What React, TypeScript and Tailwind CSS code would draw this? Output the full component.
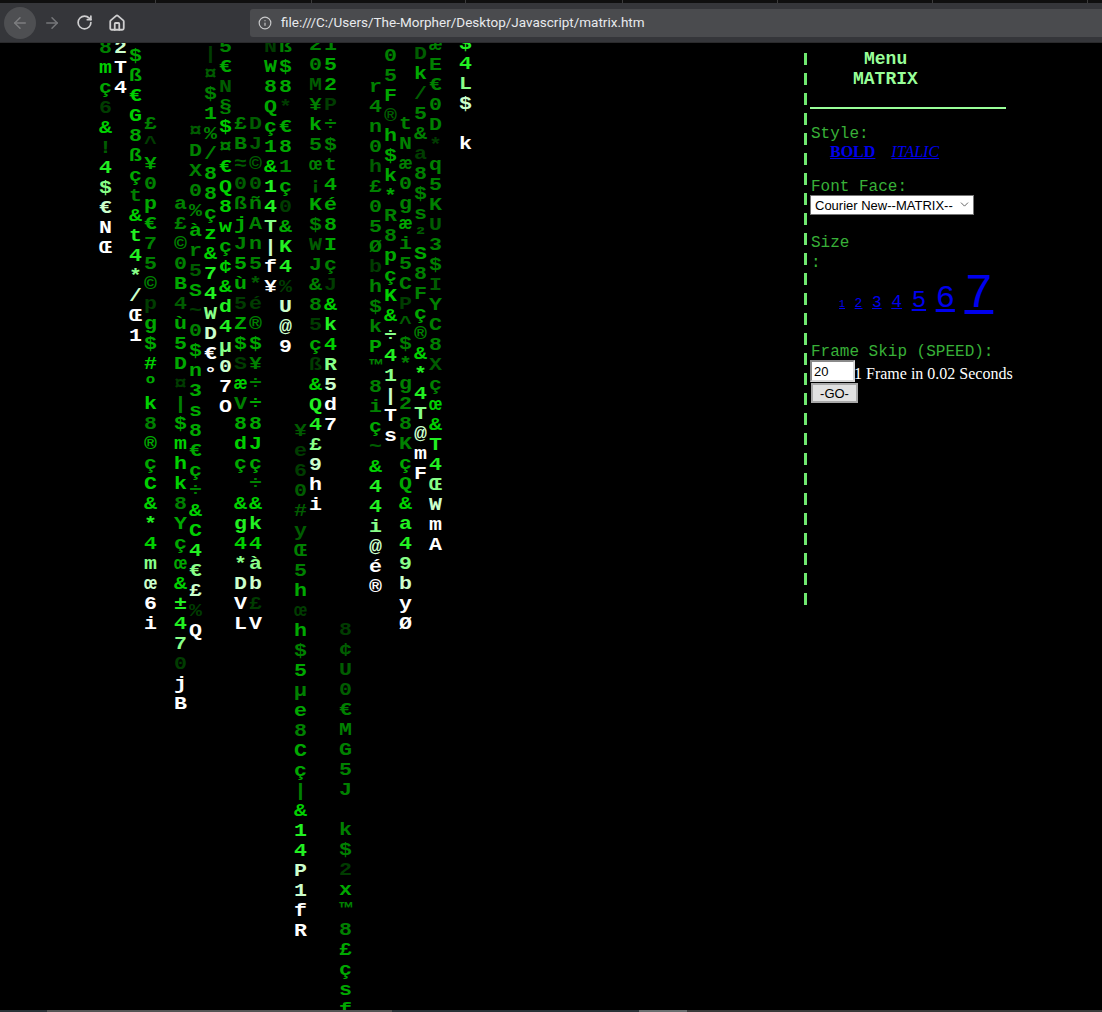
import { ArrowLeft, ArrowRight, ChevronDown, RotateCw, House, Info } from "lucide-react";

const shades: Record<string, string> = {
  w: "text-white",
  p: "text-[#ccffcc]",
  l: "text-[#88ff88]",
  b: "text-[#22f022]",
  g: "text-[#00d000]",
  m: "text-[#00a800]",
  n: "text-[#008000]",
  d: "text-[#005c00]",
  e: "text-[#003c00]",
};

// x = column centre, y = centre of first glyph, chars and shades line up one to one
const columns = [
  { x: 105, y: 47, chars: "8mç6&!4$€NŒ", tone: "ngmegdblpww" },
  { x: 120, y: 47, chars: "2T4", tone: "pww" },
  { x: 135, y: 55, chars: "$ß€G8ßçt&t4*/Œ1", tone: "mmggmmmngbblpww" },
  { x: 150, y: 123, chars: "£^¥0p€75©pg$#ºk8®çC&*4mœ6i", tone: "nemnmmnnnemmgmgnmmggbglpww" },
  { x: 180, y: 203, chars: "a£©0B4ù5D¤|$mhk8Yçœ&±470jB", tone: "nnnnmdmmmenmgggnmmmgbblew" + "w" },
  { x: 195, y: 130, chars: "¤DX0%àr5S~0$n3s8€ç÷&C4€£%Q", tone: "dnnnnmndmenmmmmmmmnggblpew" },
  { x: 210, y: 53, chars: "|¤$1%/88çz&74WD€°", tone: "ednmnnmmmggbblpww" },
  { x: 225, y: 46, chars: "5€N§$¤€Q8wç¢&d4µ07O", tone: "nmdngnggggmggbblpww" },
  { x: 240, y: 123, chars: "£B≈0ßjJ5ù5Z$SæV8dç &g4*DVL", tone: "nnddnmnmmemmegnmgmegbglpww" },
  { x: 255, y: 123, chars: "DJ©0ñAn5*é®$¥÷÷8Jç÷&k4àb£V", tone: "ddddnnnndenmnnmmgmngbglpew" },
  { x: 270, y: 46, chars: "NW8Qç1&14T|f¥", tone: "emmmmmgbblpww" },
  { x: 285, y: 46, chars: "ß$8*€81ç0&K4%U@9", tone: "nmmemmnmembbeppw" },
  { x: 300, y: 430, chars: "¥e60#yŒ5hœh$5µe8Cç|&14P1fR", tone: "deedddnnmemnmnmnmmngbbppww" },
  { x: 315, y: 44, chars: "20M¥k5œ¡K$WJ&85çß&Q4£9hi", tone: "nndnmnndmndnnnemegbblpww" },
  { x: 330, y: 44, chars: "152P÷$t4é8IçJ&k4R5d7", tone: "nmmennnmmmmnegbglpww" },
  { x: 345, y: 629, chars: "8¢U0€MG5J k$2x™8£çsf", tone: "edddnnnnnennemnnmmmm" },
  { x: 375, y: 86, chars: "r4n0h£05Øbh$kP™8iç~&44i@é®", tone: "nnnndnnnnennnmnnnmdgbblpww" },
  { x: 390, y: 55, chars: "05F®h$k*R8pçK&÷41|Ts", tone: "nnmdmmmmnnmmgglblpww" },
  { x: 405, y: 123, chars: "tNæ0gæi5CP^$*g28KçQ&a49byØ", tone: "nnnnnmnnnednnnnnnmmgbblpww" },
  { x: 420, y: 53, chars: "Dk/5&a8$s²S8Fç®&*4T@mF", tone: "dmdnnennndmnnmngbblpww" },
  { x: 435, y: 44, chars: "æE€0D*q5KU3$IYC8Xçœ&T4ŒWmA", tone: "nnnnnennndnndnnndnggbblpww" },
  { x: 465, y: 43, chars: "$4L$ k", tone: "bblpew" },
];

const tabEdges = [155, 311, 465, 622, 777, 932, 1087];
const sizes = [
  { label: "1", cls: "text-[10px]" },
  { label: "2", cls: "text-[13px]" },
  { label: "3", cls: "text-[16px]" },
  { label: "4", cls: "text-[18px]" },
  { label: "5", cls: "text-[24px]" },
  { label: "6", cls: "text-[32px]" },
  { label: "7", cls: "text-[48px]" },
];

const mono = "font-['Liberation_Mono',monospace]";

const RainColumn = ({ x, y, chars, tone }: { x: number; y: number; chars: string; tone: string }) => (
  <div
    className={`absolute w-[15px] flex flex-col items-center scale-x-120 text-[18px] leading-[20px] font-bold ${mono}`}
    style={{ left: x - 7, top: y - 52 }}
  >
    {chars.split("").map((c, i) => (
      <span key={i} className={`h-5 ${shades[tone[i]]}`}>
        {c === " " ? "\u00a0" : c}
      </span>
    ))}
  </div>
);

const App = () => {
  return (
    <div className="w-[1102px] h-[1012px] flex flex-col bg-black overflow-hidden">
      {/* Tab strip */}
      <div className="h-[3px] shrink-0 bg-[#0f0f0f] flex">
        {tabEdges.map((x, i) => (
          <div key={x} className="w-px h-full bg-[#3c3c3c]" style={{ marginLeft: i === 0 ? x : x - tabEdges[i - 1] - 1 }} />
        ))}
      </div>

      {/* Browser toolbar */}
      <div className="h-10 shrink-0 bg-[#35363a] flex items-center border-b border-[#2a2a2c]">
        <div className="ml-1 size-8 rounded-full bg-[#4e4f52] flex items-center justify-center">
          <ArrowLeft className="size-[18px] text-[#7d7e80]" strokeWidth={2} />
        </div>
        <ArrowRight className="ml-[7px] size-[18px] text-[#76777a]" strokeWidth={2} />
        <RotateCw className="ml-[15px] size-[17px] text-[#cfcfd0]" strokeWidth={2.4} />
        <House className="ml-[15px] size-[18px] text-[#cfcfd0]" strokeWidth={2.4} />
        <div className="ml-[124px] flex-1 h-7 rounded-l-[3px] bg-[#4a4b4e] flex items-center pl-[8px] gap-[9px]">
          <Info className="size-[14px] text-[#c8c9ca]" strokeWidth={2} />
          <span className="font-['Roboto',sans-serif] text-[13.5px] text-[#e8eaed] whitespace-nowrap">
            file:///C:/Users/The-Morpher/Desktop/Javascript/matrix.htm
          </span>
        </div>
      </div>

      {/* Page */}
      <div className="relative flex-1 overflow-hidden bg-black">
        {columns.map((col) => (
          <RainColumn key={col.x} {...col} />
        ))}

        {/* Menu panel */}
        <div className="absolute left-[804px] top-0 flex whitespace-nowrap">
          <div className="flex flex-col gap-2 pt-[10px]">
            {Array.from({ length: 28 }).map((_, i) => (
              <div key={i} className="w-[3px] h-3 bg-[#6fe86f]" />
            ))}
          </div>
          <div className={`pl-[4px] pt-[6px] flex flex-col text-[16px] leading-[20px] text-[#38b038] ${mono}`}>
            <div className="pl-[53px] text-[18px] font-bold text-[#99ff99]">Menu</div>
            <div className="pl-[42px] text-[18px] font-bold text-[#99ff99]">MATRIX</div>
            <div className="mt-[18px] -ml-px w-[196px] h-[2px] bg-[#99ff99]" />
            <div className="mt-[15px]">Style:</div>
            <div className="-mt-[2px] pl-[19px] flex gap-4 font-['Liberation_Serif',serif] text-[16px] text-[#0000ee]">
              <a className="font-bold underline">BOLD</a>
              <a className="italic underline">ITALIC</a>
            </div>
            <div className="mt-[15px]">Font Face:</div>
            <div className="relative -mt-[2px] -ml-px w-[164px] h-5">
              <select className="w-full h-full pl-[4px] bg-white border border-[#767676] text-black font-['Liberation_Sans',sans-serif] text-[13px] leading-none appearance-none">
                <option>Courier New--MATRIX--</option>
              </select>
              <ChevronDown className="absolute right-[3px] top-[3px] size-[13px] text-[#444444]" strokeWidth={1.5} />
            </div>
            <div className="mt-[18px]">Size</div>
            <div>:</div>
            <div className="-mt-px pl-[28px] h-[46px] flex items-baseline gap-[9.6px] text-[#0000ee] leading-[44px]">
              {sizes.map((s) => (
                <a key={s.label} className={`underline ${s.cls}`}>
                  {s.label}
                </a>
              ))}
            </div>
            <div className="mt-[24px]">Frame Skip (SPEED):</div>
            <div className="-mt-[2px] -ml-px h-[22px] flex items-start">
              <input
                readOnly
                value="20"
                className="w-[45px] h-[22px] bg-white border-2 border-t-[#8a8a8a] border-l-[#8a8a8a] border-r-[#d8d8d8] border-b-[#d8d8d8] pl-[2px] text-black font-['Liberation_Sans',sans-serif] text-[13px]"
              />
              <span className="-ml-px mt-[4px] font-['Liberation_Serif',serif] text-white">1 Frame in 0.02 Seconds</span>
            </div>
            <button className="mt-px w-[47px] h-5 bg-[#e1e1e1] border-2 border-[#a8a8a8] text-black font-['Liberation_Sans',sans-serif] text-[13px] leading-none">
              -GO-
            </button>
          </div>
        </div>
      </div>

      {/* Taskbar edge */}
      <div className="h-[2px] shrink-0 flex bg-[#3a3a3a]">
        <div className="w-[47px] bg-[#2a3338]" />
        <div className="w-[345px] bg-[#555555]" />
        <div className="w-[247px] bg-[#2a3338]" />
        <div className="w-[48px] bg-[#6a6f70]" />
      </div>
    </div>
  );
};

export default App;
